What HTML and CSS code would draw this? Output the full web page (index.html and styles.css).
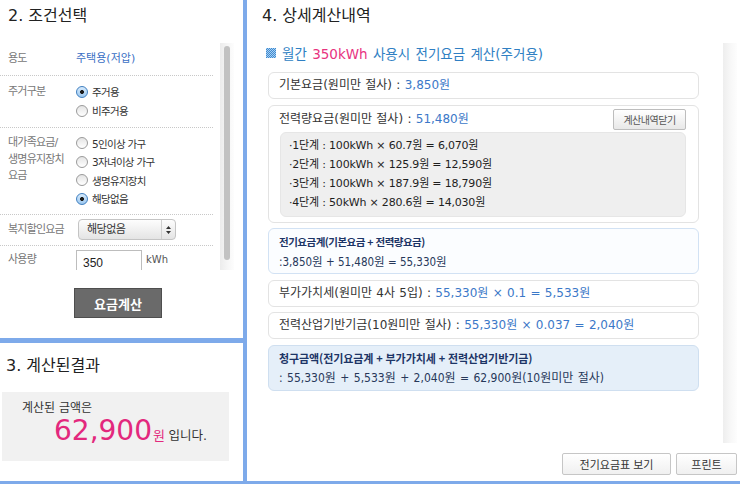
FILE: index.html
```html
<!DOCTYPE html>
<html lang="ko">
<head>
<meta charset="utf-8">
<title>전기요금 계산</title>
<link rel="stylesheet" href="styles.css">
</head>
<body>
<div class="page">
  <div class="left">
    <section class="cond">
      <h2 class="ptitle">2. 조건선택</h2>
      <div class="scrollbox">
        <div class="scroll-content">
          <div class="row r-use">
            <div class="lbl">용도</div>
            <div class="val use">주택용(저압)</div>
          </div>
          <div class="row r-res">
            <div class="lbl">주거구분</div>
            <div class="val radios">
              <div class="radio on"><span class="dot"></span>주거용</div>
              <div class="radio"><span class="dot"></span>비주거용</div>
            </div>
          </div>
          <div class="row r-fam">
            <div class="lbl multi">대가족요금/<br>생명유지장치<br>요금</div>
            <div class="val radios">
              <div class="radio"><span class="dot"></span>5인이상 가구</div>
              <div class="radio"><span class="dot"></span>3자녀이상 가구</div>
              <div class="radio"><span class="dot"></span>생명유지장치</div>
              <div class="radio on"><span class="dot"></span>해당없음</div>
            </div>
          </div>
          <div class="row r-wel">
            <div class="lbl">복지할인요금</div>
            <div class="val">
              <div class="select"><span class="sel-text">해당없음</span><span class="arrows"><svg width="7" height="10" viewBox="0 0 7 10"><path d="M3.5 1 L6 4 H1 Z M3.5 9 L6 6 H1 Z" fill="#333"/></svg></span></div>
            </div>
          </div>
          <div class="row r-amt">
            <div class="lbl">사용량</div>
            <div class="val amt"><div class="input">350</div><span class="unit">kWh</span></div>
          </div>
        </div>
        <div class="vtrack"><div class="vthumb"></div></div>
      </div>
      <div class="btnrow"><button class="calc">요금계산</button></div>
    </section>
    <section class="result">
      <h2 class="ptitle rtitle">3. 계산된결과</h2>
      <div class="resbox">
        <div class="res1">계산된 금액은</div>
        <div class="res2"><span class="big">62,900</span><span class="won">원</span> <span class="ip">입니다.</span></div>
      </div>
    </section>
  </div>
  <div class="right">
    <h2 class="ptitle dtitle">4. 상세계산내역</h2>
    <div class="detail-wrap">
      <div class="detail">
        <div class="dhead"><span class="sq"></span><span class="dtext">월간 <em>350kWh</em> 사용시 전기요금 계산(주거용)</span></div>
        <div class="box">기본요금(원미만 절사) : <span class="v">3,850원</span></div>
        <div class="box b2">
          <div class="b2head"><span>전력량요금(원미만 절사) : <span class="v">51,480원</span></span><button class="mini">계산내역닫기</button></div>
          <ul class="steps">
            <li>·1단계 : 100kWh × 60.7원 = 6,070원</li>
            <li>·2단계 : 100kWh × 125.9원 = 12,590원</li>
            <li>·3단계 : 100kWh × 187.9원 = 18,790원</li>
            <li>·4단계 : 50kWh × 280.6원 = 14,030원</li>
          </ul>
        </div>
        <div class="box sum">
          <div class="st">전기요금계(기본요금 + 전력량요금)</div>
          <div class="sv">:3,850원 + 51,480원 = 55,330원</div>
        </div>
        <div class="box">부가가치세(원미만 4사 5입) : <span class="v">55,330원 × 0.1 = 5,533원</span></div>
        <div class="box">전력산업기반기금(10원미만 절사) : <span class="v">55,330원 × 0.037 = 2,040원</span></div>
        <div class="box sum total">
          <div class="st">청구금액(전기요금계 + 부가가치세 + 전력산업기반기금)</div>
          <div class="sv">: 55,330원 + 5,533원 + 2,040원 = 62,900원(10원미만 절사)</div>
        </div>
      </div>
      <div class="rtrack"></div>
    </div>
    <div class="btns"><button class="btn b-table">전기요금표 보기</button><button class="btn b-print">프린트</button></div>
  </div>
</div>
</body>
</html>
```

FILE: styles.css
```css
* { box-sizing: border-box; }
html, body { margin: 0; padding: 0; }
body {
  width: 740px;
  height: 484px;
  overflow: hidden;
  background: #fff;
  font-family: "DejaVu Sans", "Noto Sans CJK KR", sans-serif;
  font-size: 11px;
  color: #333;
}
.page {
  display: flex;
  height: 484px;
  border-bottom: 3px solid #7eaaea;
}
.left {
  width: 247px;
  flex: none;
  display: flex;
  flex-direction: column;
  border-right: 4px solid #7eaaea;
}
.cond {
  height: 343px;
  flex: none;
  border-bottom: 5px solid #7eaaea;
}
.result { flex: 1; }
.right { flex: 1; display: flex; flex-direction: column; }

.ptitle {
  margin: 0;
  padding: 6px 8px 0;
  font-size: 16px;
  line-height: 20px;
  font-weight: normal;
  color: #222;
}
.rtitle { padding: 13px 6px 0; }
.dtitle { padding: 6px 15px 0; }

/* condition panel */
.scrollbox {
  display: flex;
  height: 227px;
  margin-top: 17px;
}
.scroll-content {
  width: 213px;
  overflow: hidden;
}
.vtrack {
  width: 14px;
  margin-left: 7px;
  padding: 3px 4px;
  background: linear-gradient(to right, #ececec, #f7f7f7 60%, #fdfdfd);
}
.vthumb {
  height: 214px;
  background: #c2c2c2;
  border-radius: 4px;
}
.row {
  display: flex;
  border-bottom: 1px dotted #c8c8c8;
}
.lbl {
  width: 76px;
  flex: none;
  padding-left: 8px;
  color: #777;
  font-size: 11px;
  letter-spacing: -0.8px;
}
.val { flex: 1; }
.r-use { height: 33px; }
.r-use .lbl, .r-use .val { line-height: 32px; }
.use { color: #3a6fc4; }
.r-res { padding: 6px 0 6px; height: 52px; }
.r-res .lbl { line-height: 19px; }
.radio {
  display: flex;
  align-items: center;
  height: 19px;
  font-size: 10.5px;
  letter-spacing: -0.7px;
  color: #333;
}
.r-fam { padding: 6px 0 6px; height: 87px; }
.r-fam .radio { height: 18.5px; }
.lbl.multi { line-height: 16.5px; padding-top: 1px; }
.dot {
  width: 12px;
  height: 12px;
  flex: none;
  margin-right: 4px;
  border-radius: 50%;
  border: 1px solid #9a9a9a;
  background: linear-gradient(#e4e4e4, #ffffff);
}
.radio.on .dot {
  border-color: #3f7fc0;
  background: radial-gradient(circle, #1b1b1b 0 1.6px, transparent 2.3px), linear-gradient(#d6eafc, #9dc8ef);
}
.r-wel { height: 31px; padding-top: 4px; }
.r-wel .lbl { line-height: 22px; }
.select {
  display: flex;
  width: 98px;
  height: 21px;
  margin-left: 2px;
  border: 1px solid #c4c4c4;
  border-radius: 4px;
  background: linear-gradient(#fdfdfd, #e4e4e4);
}
.sel-text {
  flex: 1;
  padding-left: 8px;
  line-height: 19px;
  font-size: 11px;
  letter-spacing: -0.5px;
  color: #333;
}
.arrows {
  width: 14px;
  border-left: 1px solid #cfcfcf;
  display: flex;
  align-items: center;
  justify-content: center;
}
.r-amt { border-bottom: none; padding-top: 4px; }
.r-amt .lbl { padding-top: 2px; line-height: 16px; }
.amt { display: flex; align-items: flex-start; }
.input {
  width: 66px;
  height: 24px;
  border: 1px solid #bdbdbd;
  padding: 5px 0 0 6px;
  font-family: "Liberation Sans", sans-serif;
  font-size: 12px;
  color: #222;
}
.unit {
  margin-left: 4px;
  margin-top: 2px;
  font-size: 10px;
  line-height: 16px;
  color: #555;
}
.btnrow { padding: 18px 0 0 74px; }
.calc {
  width: 88px;
  height: 30px;
  border: 1px solid #4e4e4e;
  background: #6a6a6a;
  color: #fff;
  font-family: "Noto Sans CJK KR", sans-serif;
  font-size: 13px;
  font-weight: bold;
  padding: 0;
}

/* result panel */
.resbox {
  margin: 16px 0 0 2px;
  width: 227px;
  height: 69px;
  background: #f1f1f1;
  padding-top: 8px;
}
.res1 {
  padding-left: 20px;
  line-height: 16px;
  font-size: 12px;
  color: #333;
}
.res2 {
  padding-left: 52px;
  line-height: 30px;
  white-space: nowrap;
}
.big {
  font-size: 28px;
  color: #e3287d;
}
.won { font-size: 13px; color: #e3287d; margin-left: 1px; }
.ip { font-size: 12.5px; color: #333; }

/* detail panel */
.detail-wrap {
  display: flex;
  height: 400px;
  margin-top: 17px;
}
.detail {
  flex: 1;
  padding: 1px 24px 0 21px;
  display: flex;
  flex-direction: column;
  gap: 5.5px;
}
.dhead {
  display: flex;
  align-items: center;
  height: 18px;
  margin: 0 0 4.5px -2px;
  font-size: 13.5px;
  word-spacing: 1px;
  color: #2f7fc3;
  white-space: nowrap;
}
.dhead em { font-style: normal; color: #e8337f; }
.sq {
  width: 10px;
  height: 10px;
  flex: none;
  margin-right: 6px;
  background: repeating-conic-gradient(#3f8ad0 0 25%, #a9d0f2 0 50%) 0 0 / 2px 2px;
}
.box {
  border: 1px solid #e3e3e3;
  border-radius: 6px;
  padding: 5px 10px;
  line-height: 15px;
  font-size: 12px;
  color: #333;
  white-space: nowrap;
  word-spacing: 0.5px;
  background: #fff;
}
.v { color: #3b78c8; }
.b2 { padding: 3px 12px 5px 11px; }
.b2head {
  display: flex;
  justify-content: space-between;
  align-items: center;
  height: 21px;
}
.b2head > span { margin-left: -1px; }
.mini {
  width: 73px;
  height: 21px;
  padding: 0;
  border: 1px solid #bdbdbd;
  border-radius: 2px;
  background: linear-gradient(#ffffff, #e8e8e8);
  font-family: "Noto Sans CJK KR", sans-serif;
  font-size: 10px;
  letter-spacing: -0.5px;
  color: #555;
}
.steps {
  list-style: none;
  margin: 2px 0 0;
  padding: 3px 0 4px 8px;
  border: 1px solid #e6e6e6;
  border-radius: 6px;
  background: #efefef;
  font-family: "DejaVu Sans", "Noto Sans CJK KR", sans-serif;
  font-size: 11px;
  letter-spacing: -0.2px;
  line-height: 19px;
  color: #1e1e1e;
  word-spacing: 0;
}
.sum {
  padding: 3px 10px 1px;
  line-height: 20px;
  border-color: #d2e2f4;
  background: #fbfdff;
}
.total {
  padding: 2px 10px 2px;
  border-color: #cfdff0;
  background: #e5eff9;
}
.st {
  font-family: "Noto Sans CJK KR", sans-serif;
  font-weight: bold;
  font-size: 10.5px;
  letter-spacing: -0.5px;
  color: #1d3566;
  word-spacing: 0;
}
.total .st { font-size: 11px; letter-spacing: -0.1px; }
.sv {
  font-family: "DejaVu Sans Condensed", "Noto Sans CJK KR", sans-serif;
  font-size: 11.5px;
  color: #27385a;
  word-spacing: 0;
}
.total .sv { font-size: 12px; word-spacing: 1px; }
.rtrack {
  width: 14px;
  margin-right: 3px;
  background: linear-gradient(to right, #eeeeee, #f8f8f8 60%, #fdfdfd);
}
.btns {
  display: flex;
  justify-content: flex-end;
  gap: 5px;
  padding: 10px 3px 0 0;
}
.btn {
  height: 22px;
  padding: 0;
  border: 1px solid #c6c6c6;
  border-radius: 2px;
  background: linear-gradient(#ffffff, #f0f0f0);
  font-family: "Noto Sans CJK KR", sans-serif;
  font-size: 11px;
  color: #333;
}
.b-table { width: 109px; }
.b-print { width: 61px; }
```
